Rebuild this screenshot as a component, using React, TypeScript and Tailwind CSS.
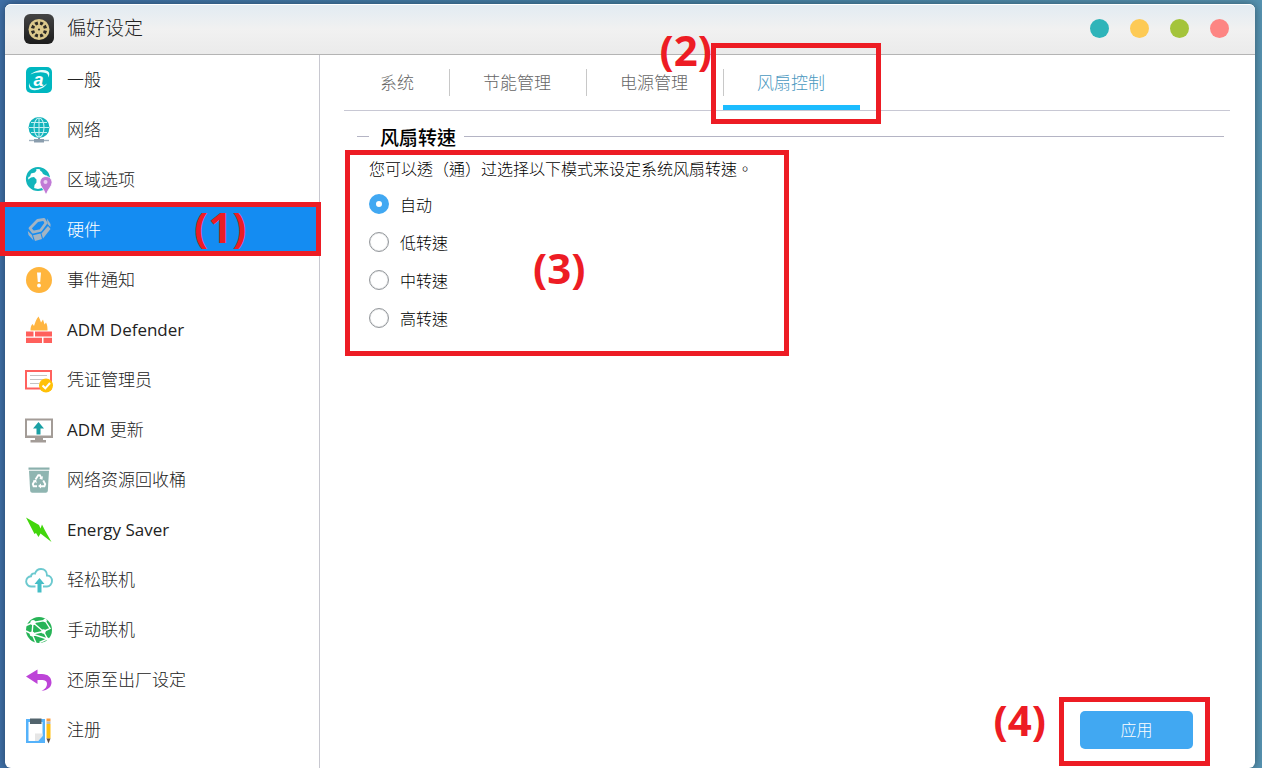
import { ReactNode, useState } from "react";
import clsx from "clsx";

interface MenuItem {
  id: string;
  label: ReactNode;
  icon: ReactNode;
}

const menuItems: MenuItem[] = [
  { id: "general", label: "一般", icon: <GeneralIcon /> },
  { id: "network", label: "网络", icon: <NetworkIcon /> },
  { id: "regional", label: "区域选项", icon: <RegionIcon /> },
  { id: "hardware", label: "硬件", icon: <HardwareIcon /> },
  { id: "notification", label: "事件通知", icon: <NotificationIcon /> },
  {
    id: "defender",
    label: <span className="font-normal">ADM Defender</span>,
    icon: <DefenderIcon />,
  },
  { id: "certificate", label: "凭证管理员", icon: <CertificateIcon /> },
  {
    id: "update",
    label: (
      <>
        <span className="font-normal">ADM</span> 更新
      </>
    ),
    icon: <UpdateIcon />,
  },
  { id: "recycle", label: "网络资源回收桶", icon: <RecycleIcon /> },
  {
    id: "energy",
    label: <span className="font-normal">Energy Saver</span>,
    icon: <EnergyIcon />,
  },
  { id: "ezconnect", label: "轻松联机", icon: <CloudIcon /> },
  { id: "manual", label: "手动联机", icon: <ManualIcon /> },
  { id: "factory", label: "还原至出厂设定", icon: <RestoreIcon /> },
  { id: "register", label: "注册", icon: <RegisterIcon /> },
];

const tabs = ["系统", "节能管理", "电源管理", "风扇控制"];

const fanSpeeds = [
  { value: "auto", label: "自动" },
  { value: "low", label: "低转速" },
  { value: "medium", label: "中转速" },
  { value: "high", label: "高转速" },
];

const windowButtons = [
  { label: "帮助", color: "bg-[#2fb4b9]" },
  { label: "最小化", color: "bg-[#fdca55]" },
  { label: "最大化", color: "bg-[#a4c43b]" },
  { label: "关闭", color: "bg-[#fd8583]" },
];

function App() {
  const [page, setPage] = useState("hardware");
  const [tab, setTab] = useState("风扇控制");

  return (
    <div className="flex min-h-screen bg-linear-to-r from-[#3f6fa6] via-[#4480a4] to-[#5692b0] pt-1 pr-[7px] pl-[5px] font-['Open_Sans','Noto_Sans_CJK_TC',sans-serif] font-light">
      <div className="flex flex-1 flex-col rounded-md bg-white shadow-[0_0_8px_rgba(0,0,0,0.4)]">
        <TitleBar />
        <div className="flex flex-1">
          <Sidebar page={page} onSelect={setPage} />
          <main className="flex flex-1 flex-col pr-[25px] pl-6">
            <Tabs tab={tab} onSelect={setTab} />
            <FanControl />
            <div className="mt-auto flex justify-end pr-[37px] pb-[19px]">
              <div className="relative">
                <button
                  type="button"
                  className="block h-[38px] w-[113px] rounded-[5px] bg-[#41a8f2] text-base text-white"
                >
                  应用
                </button>
                <Mark
                  text="(4)"
                  box="-top-[14px] -right-[17px] -bottom-[17px] -left-[21px]"
                  label="-top-3 right-full mr-[34px]"
                />
              </div>
            </div>
          </main>
        </div>
      </div>
    </div>
  );
}

export default App;

function TitleBar() {
  return (
    <header className="flex h-[51px] items-center rounded-t-md border-t border-b border-t-white border-b-[#b4b4b4] bg-linear-to-b from-[#e2ebf2] via-[#f1f1f1] to-[#ebebeb] pr-[26px] pb-[2px] pl-[19px]">
      <PreferencesIcon />
      <h1 className="ml-[13px] flex-1 text-[19px] text-[#222]">偏好设定</h1>
      <div className="flex gap-[21px]">
        {windowButtons.map((btn) => (
          <button
            key={btn.label}
            type="button"
            aria-label={btn.label}
            className={clsx("size-[19px] rounded-full", btn.color)}
          />
        ))}
      </div>
    </header>
  );
}

function Sidebar({
  page,
  onSelect,
}: {
  page: string;
  onSelect: (id: string) => void;
}) {
  return (
    <nav className="w-[315px] shrink-0 border-r border-[#c8c8d0]">
      <ul>
        {menuItems.map((item) => (
          <li key={item.id} className="relative">
            <button
              type="button"
              onClick={() => onSelect(item.id)}
              className={clsx(
                "flex h-[50px] w-full items-center gap-[14px] pl-5 text-[17px]",
                page === item.id ? "bg-[#148cf2] text-white" : "text-[#222]"
              )}
            >
              {item.icon}
              <span>{item.label}</span>
            </button>
            {item.id === "hardware" && (
              <Mark
                text="(1)"
                box="-top-[3px] -right-[2px] -bottom-[1px] -left-[5px]"
                label="top-[1px] left-[189px]"
              />
            )}
          </li>
        ))}
      </ul>
    </nav>
  );
}

function Tabs({
  tab,
  onSelect,
}: {
  tab: string;
  onSelect: (name: string) => void;
}) {
  return (
    <div className="flex h-14 border-b border-[#c8c8d4] pl-[2px]">
      {tabs.map((name, i) => (
        <div key={name} className="relative flex">
          <button
            type="button"
            onClick={() => onSelect(name)}
            className={clsx(
              "flex items-center border-b-5 pt-1 text-[17px]",
              name === tab
                ? "border-[#1cbcff] text-[#4a98c0]"
                : "border-transparent text-[#666]"
            )}
          >
            <span
              className={clsx(
                "flex h-[27px] items-center border-l pt-[2px] pr-[35px] pl-[33px]",
                i === 0 ? "border-transparent" : "border-[#c8c8c8]"
              )}
            >
              {name}
            </span>
          </button>
          {name === "风扇控制" && (
            <Mark
              text="(2)"
              box="-top-3 -right-[21px] -bottom-[14px] -left-3"
              label="-top-[26px] right-full mr-[11px]"
            />
          )}
        </div>
      ))}
    </div>
  );
}

function FanControl() {
  const [speed, setSpeed] = useState("auto");

  return (
    <section className="pt-[9px] pr-[6px] pl-[13px]">
      <div className="flex items-center">
        <span className="h-px w-3 bg-[#b4b4c4]" />
        <h2 className="mr-2 ml-[11px] pt-1 text-[19px] leading-[28px] font-medium text-black">
          风扇转速
        </h2>
        <span className="h-px flex-1 bg-[#b4b4c4]" />
      </div>
      <div className="relative ml-3 w-fit text-base text-black">
        <p className="pt-[5px] leading-6">
          您可以透（通）过选择以下模式来设定系统风扇转速。
        </p>
        <div className="mt-1">
          {fanSpeeds.map((item) => (
            <label
              key={item.value}
              className="flex h-[38px] w-fit items-center gap-[11px]"
            >
              <input
                type="radio"
                name="fan-speed"
                value={item.value}
                checked={speed === item.value}
                onChange={() => setSpeed(item.value)}
                className="size-5 appearance-none rounded-full border border-[#94989c] bg-white shadow-[inset_0_0_1px_#94989c] checked:border-[7px] checked:border-[#41a8f2] checked:shadow-none"
              />
              <span className="pt-[2px]">{item.label}</span>
            </label>
          ))}
        </div>
        <Mark
          text="(3)"
          box="-top-[2px] -right-9 -bottom-[19px] -left-6"
          label="top-[95px] left-[164px]"
        />
      </div>
    </section>
  );
}

// red frame plus step number drawn over a part of the screen
function Mark({
  text,
  box,
  label,
}: {
  text: string;
  box: string;
  label: string;
}) {
  return (
    <>
      <span
        className={clsx(
          "pointer-events-none absolute border-5 border-[#ed1c24]",
          box
        )}
      />
      <span
        className={clsx(
          "pointer-events-none absolute text-[42px] leading-[42px] font-bold text-[#ed1c24]",
          label
        )}
      >
        {text}
      </span>
    </>
  );
}

function Icon({ children }: { children: ReactNode }) {
  return (
    <svg viewBox="0 0 28 28" className="size-7 shrink-0" fill="none">
      {children}
    </svg>
  );
}

function PreferencesIcon() {
  const holes = [0, 45, 90, 135, 180, 225, 270, 315];
  return (
    <svg viewBox="0 0 30 30" className="size-[30px] shrink-0">
      <defs>
        <linearGradient id="prefBg" x1="0" y1="0" x2="0" y2="1">
          <stop offset="0" stopColor="#444" />
          <stop offset="1" stopColor="#1c1c1c" />
        </linearGradient>
      </defs>
      <rect width="30" height="30" rx="6" fill="url(#prefBg)" />
      <circle cx="15" cy="15.500" r="10.500" fill="#dcc98c" />
      {holes.map((deg) => (
        <path
          key={deg}
          d="M13.200 7.500h3.600l-.6 3.200h-2.400z"
          fill="#2b2924"
          transform={`rotate(${deg + 22.5} 15 15.5)`}
        />
      ))}
      <circle cx="15" cy="15.500" r="1.100" fill="#2b2924" />
    </svg>
  );
}

function GeneralIcon() {
  return (
    <Icon>
      <rect x="1" y="1" width="26" height="26" rx="5" fill="#00b7c0" />
      <path
        d="M5.500 8.500C9 5 18 2.500 22.500 5c2.500 1.500 2 4.500.8 6.500.2-2.500-.8-4-2.800-4.500C16 5.600 10 6.500 5.500 8.500z"
        fill="#e6fbfc"
      />
      <path
        d="M4.300 17c-1 2.500-.3 5.500 1.700 6.500 5 2 13-.8 16-6-4 3.600-9 5.300-13 4.700-3-.4-4.700-2.200-4.700-5.200z"
        fill="#e6fbfc"
      />
      <text
        x="8.500"
        y="19.500"
        fill="#fff"
        fontSize="18"
        fontWeight="700"
        fontStyle="italic"
        fontFamily="Liberation Sans, sans-serif"
      >
        a
      </text>
    </Icon>
  );
}

function NetworkIcon() {
  return (
    <Icon>
      <circle cx="14" cy="11.500" r="10.500" fill="#14b4bc" />
      <g stroke="#c4eff1" strokeWidth="1.100">
        <ellipse cx="14" cy="11.500" rx="5" ry="9.500" />
        <path d="M14 2v19M4 11.500h20M6 6.500h16M6 16.500h16" />
      </g>
      <path d="M13 22h2v2h-2z" fill="#7f93a5" />
      <path d="M4 24.500h20" stroke="#a0b0be" strokeWidth="1.400" />
      <path d="M9 23h10v3.500H9z" fill="#8a9dad" />
    </Icon>
  );
}

function RegionIcon() {
  return (
    <Icon>
      <circle cx="13" cy="13" r="11" stroke="#12b5bb" strokeWidth="2.200" />
      <path
        d="M2.500 11C3 6 6.500 2.500 10.500 2l1 2.500L10 6.500 6 7.500l-1 3zM2.500 14l3.500-2.500 3-.5 2.500 2.500v3L9.500 19l-.5 4C5.500 21.500 2.500 18 2.500 14z"
        fill="#12b5bb"
      />
      <path
        d="M15.500 2c4 .5 7 3.500 8 7.500l-2.500 0-3-1.500-1-2-2-1.500z"
        fill="#12b5bb"
      />
      <path
        d="M21 10.500c-3.500 0-6 2.500-6 6 0 4 4 6.500 5.500 11.500h1c1.500-5 5.500-7.500 5.500-11.500 0-3.500-2.500-6-6-6z"
        fill="#c17ad6"
        stroke="#fff"
        strokeWidth=".8"
      />
      <circle cx="20.500" cy="16" r="2" fill="#ead0f2" />
    </Icon>
  );
}

function HardwareIcon() {
  return (
    <Icon>
      <path
        d="m12.500 4.500 6.500-1.200 2 3.700-5.500 7.500-7.500 1.700-3-4z"
        stroke="#a3b4c3"
        strokeWidth="2.800"
        strokeLinejoin="round"
      />
      <path d="m22 2.500 3.500 5.500v3L22.500 8z" fill="#a3b4c3" />
      <path d="m23 10 2.500 3-7.500 9.500-1.500-5z" fill="#a3b4c3" />
      <path
        d="m2.800 15 4.200 4 1.500 5.500L3.500 19zM8 19.200l7.500-1.700 1.500 5.500-7 2z"
        fill="#a3b4c3"
      />
    </Icon>
  );
}

function NotificationIcon() {
  return (
    <Icon>
      <circle cx="14" cy="14" r="13" fill="#ffb53d" />
      <path d="M12 6.500h4l-.8 9.500h-2.400z" fill="#fff" />
      <circle cx="14" cy="19.500" r="1.900" fill="#fff" />
    </Icon>
  );
}

function DefenderIcon() {
  return (
    <Icon>
      <path
        d="M5.500 14.500c0-3 .5-5 2-6.500l1.500 2c1-3 2-6.500 4.500-9.500 1 2 2 4 2.500 6l2-3 1.500 5L21 6.500c1.500 2.500 1.500 5.500 1.500 8z"
        fill="#ffb541"
      />
      <path
        d="M1 15.500h7.500v5H1zM10 15.500h17v5H10zM1 21.700h16v5.300H1zM18.500 21.700H27v5.300h-8.500z"
        fill="#ff605c"
      />
    </Icon>
  );
}

function CertificateIcon() {
  return (
    <Icon>
      <rect
        x="1"
        y="5"
        width="25"
        height="17.500"
        stroke="#ff615e"
        strokeWidth="2"
      />
      <path
        d="M5 9.500h17M5 13.500h17M5 17.500h9"
        stroke="#c4c4c4"
        strokeWidth="1.200"
      />
      <circle cx="21" cy="19.500" r="7" fill="#ffc107" />
      <path d="m17.500 19.500 2.800 2.800 4.700-5.300" stroke="#fff" strokeWidth="2" />
    </Icon>
  );
}

function UpdateIcon() {
  return (
    <Icon>
      <rect
        x="1"
        y="3.500"
        width="26"
        height="17.500"
        fill="#fff"
        stroke="#a39c97"
        strokeWidth="2"
      />
      <path d="M0 19.500h28V22H0z" fill="#a39c97" />
      <path d="M10 22h8v2h3v2.500H5.500V24H10z" fill="#a39c97" />
      <path d="m13.500 6 5.500 6.500h-3.500v6h-4v-6H8z" fill="#1aa0a4" />
    </Icon>
  );
}

function RecycleIcon() {
  return (
    <Icon>
      <path d="M3.500 1.500h21v2.200h-21z" fill="#8bb0ad" />
      <path
        d="M4 4.800h20l-1.200 20.200q-.2 1.800-2 1.800H7.200q-1.800 0-2-1.800z"
        fill="#8fb5b1"
      />
      <g stroke="#fff" strokeWidth="1.900">
        <path d="m10.500 13.500 2.800-4.300h1.500l1.800 3" />
        <path d="m18.200 14.500 2 3.500-.8 2.200h-4" />
        <path d="M12 20.200H8.600L7.800 18l1.700-3" />
      </g>
      <path
        d="m17.800 10-.3 3.800-3.300-1zM16 17.500v5l-3-2.500zM8 14.500l3.200-.8.500 3.500z"
        fill="#fff"
      />
    </Icon>
  );
}

function EnergyIcon() {
  return (
    <Icon>
      <path
        d="M1 1.500 14 9l1.500 3.500L17 8.500l3 6L26.500 26 15.500 17.500 13.500 21 11 17l-1.500 1z"
        fill="#42d60c"
      />
    </Icon>
  );
}

function CloudIcon() {
  return (
    <Icon>
      <path
        d="M10.500 20.500H6.500a5 5 0 0 1-.5-10.200C6.200 8 8 7 10 7.500 11 4.500 13.500 3 16 3c3.500 0 6 2.500 6 6.500 3 0 5 2.500 5 5.500s-2.300 5.500-5 5.500h-4"
        stroke="#6cc9cf"
        strokeWidth="1.900"
      />
      <path d="m14.500 12 5 6h-3v8.500h-4V18h-3z" fill="#45bec6" />
    </Icon>
  );
}

function ManualIcon() {
  return (
    <Icon>
      <circle cx="14" cy="14" r="13" fill="#27b457" />
      <g stroke="#fff" strokeWidth="1.400">
        <path d="M1 9.500 8 6.500l12-2M8 6.500 18.500 15.500 7 18zM20 4.500l5 8-6.500 3M7 18l-6-3M7 18l4 9M18.500 15.500l4 7.500-8 3.500M7 18l15.500 5" />
      </g>
      <circle cx="8" cy="6.500" r="2.600" fill="#fff" />
      <circle cx="18.500" cy="15.500" r="2.200" fill="#fff" />
      <circle cx="7" cy="18" r="2.400" fill="#fff" />
      <circle cx="20" cy="4.500" r="1.800" fill="#fff" />
      <circle cx="22.500" cy="23" r="1.600" fill="#fff" />
    </Icon>
  );
}

function RestoreIcon() {
  return (
    <Icon>
      <path
        d="M1 10.500 12.500 3.500V8H17c6 0 9.500 3.500 9.500 8.500 0 4.500-3.500 7.500-10 8.500 3.500-2 5.500-4 5.500-7s-2-4-5.500-4h-4v4z"
        fill="#bd44d8"
      />
    </Icon>
  );
}

function RegisterIcon() {
  return (
    <Icon>
      <path d="M1 3h19v24H1z" fill="#55b2fa" />
      <path d="M3.500 6h14v14L13 25H3.500z" fill="#fff" />
      <path d="M10 17.500h7.500V20L13 25h-3z" fill="#e6e6e6" />
      <path d="M5 2.500h11.500V8H5z" fill="#52646d" />
      <path d="M21.500 2.500h4v3h-4z" fill="#fb9a3c" />
      <path d="M21.500 5.500h4v2.500h-4z" fill="#b6bcc2" />
      <path d="M21.500 8h4v14.500h-4z" fill="#ffbf11" />
      <path d="M21.500 22.500h4l-2 5z" fill="#5a4a40" />
    </Icon>
  );
}
